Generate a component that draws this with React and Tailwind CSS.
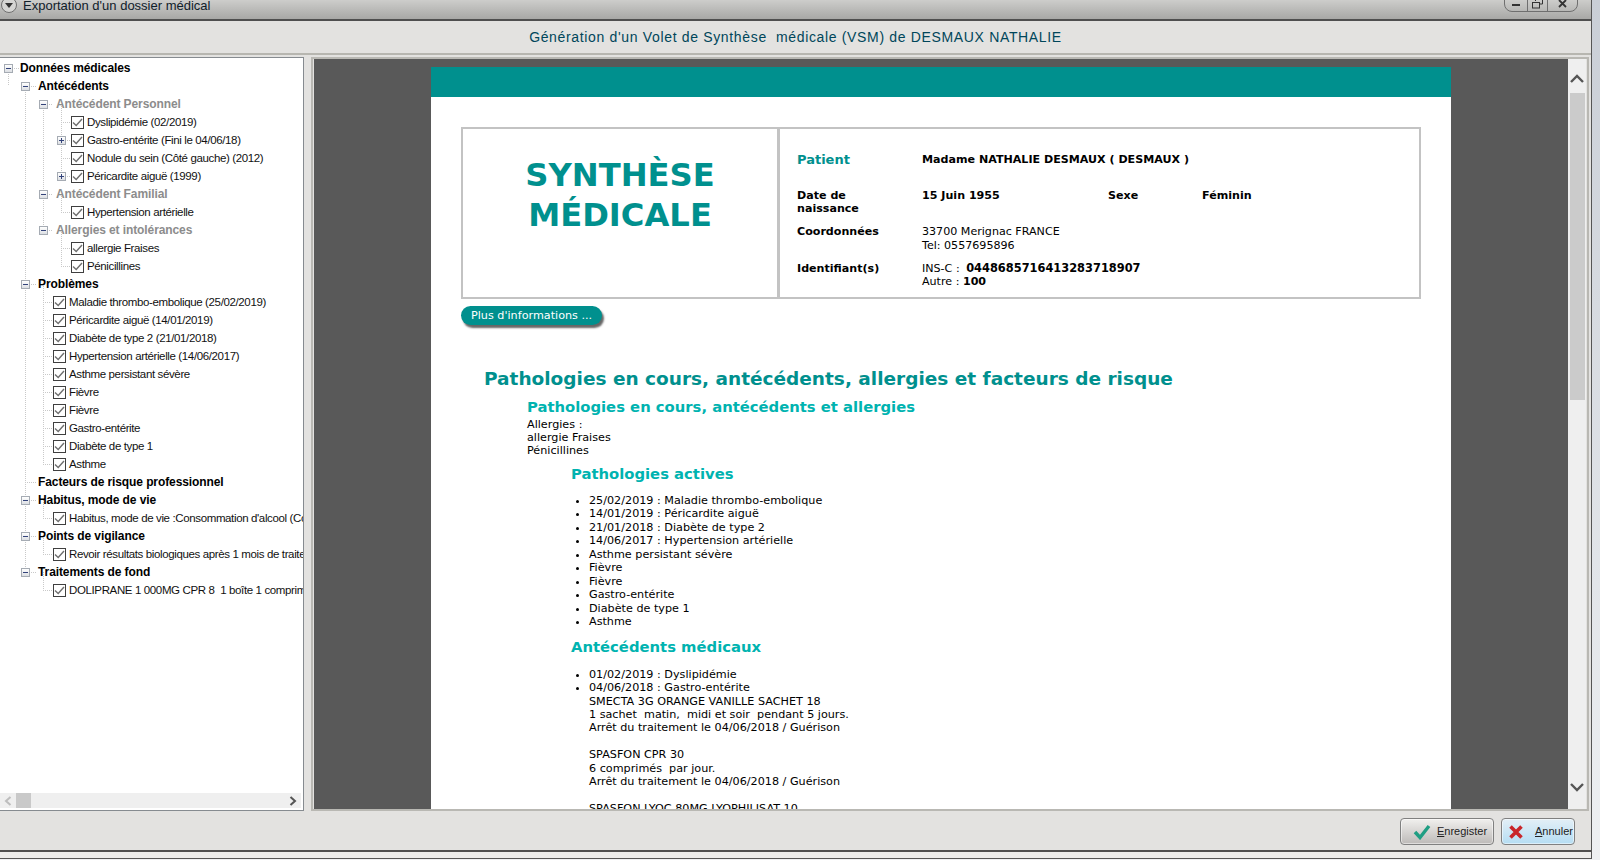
import React from "react";

const TREE_FONT = "[font-family:Liberation_Sans,sans-serif]";
const DOC_FONT = "[font-family:DejaVu_Sans,sans-serif]";

const rows = [
  { level: 0, label: "Données médicales", kind: "bold", open: "minus" },
  { level: 1, label: "Antécédents", kind: "bold", open: "minus" },
  { level: 2, label: "Antécédent Personnel", kind: "group", open: "minus" },
  { level: 3, label: "Dyslipidémie (02/2019)", kind: "check" },
  { level: 3, label: "Gastro-entérite (Fini le 04/06/18)", kind: "check", open: "plus" },
  { level: 3, label: "Nodule du sein (Côté gauche) (2012)", kind: "check" },
  { level: 3, label: "Péricardite aiguë (1999)", kind: "check", open: "plus" },
  { level: 2, label: "Antécédent Familial", kind: "group", open: "minus" },
  { level: 3, label: "Hypertension artérielle", kind: "check" },
  { level: 2, label: "Allergies et intolérances", kind: "group", open: "minus" },
  { level: 3, label: "allergie Fraises", kind: "check" },
  { level: 3, label: "Pénicillines", kind: "check" },
  { level: 1, label: "Problèmes", kind: "bold", open: "minus" },
  { level: 2, label: "Maladie thrombo-embolique (25/02/2019)", kind: "check" },
  { level: 2, label: "Péricardite aiguë (14/01/2019)", kind: "check" },
  { level: 2, label: "Diabète de type 2 (21/01/2018)", kind: "check" },
  { level: 2, label: "Hypertension artérielle (14/06/2017)", kind: "check" },
  { level: 2, label: "Asthme persistant sévère", kind: "check" },
  { level: 2, label: "Fièvre", kind: "check" },
  { level: 2, label: "Fièvre", kind: "check" },
  { level: 2, label: "Gastro-entérite", kind: "check" },
  { level: 2, label: "Diabète de type 1", kind: "check" },
  { level: 2, label: "Asthme", kind: "check" },
  { level: 1, label: "Facteurs de risque professionnel", kind: "bold" },
  { level: 1, label: "Habitus, mode de vie", kind: "bold", open: "minus" },
  { level: 2, label: "Habitus, mode de vie :Consommation d'alcool (Consommation occasionnelle)", kind: "check" },
  { level: 1, label: "Points de vigilance", kind: "bold", open: "minus" },
  { level: 2, label: "Revoir résultats biologiques après 1 mois de traitement", kind: "check" },
  { level: 1, label: "Traitements de fond", kind: "bold", open: "minus" },
  { level: 2, label: "DOLIPRANE 1 000MG CPR 8  1 boîte 1 comprimé le matin", kind: "check" },
];

const indent = ["pl-[4px]", "pl-[21px]", "pl-[39px]", "pl-[57px]"];

// dotted tree guides: x, first row, last row
const guides = [
  [8, 0, 1],
  [25, 1, 28],
  [43, 2, 9],
  [43, 12, 22],
  [43, 24, 25],
  [43, 26, 27],
  [43, 28, 29],
  [61, 2, 6],
  [61, 7, 8],
  [61, 9, 11],
];

const rowY = (i) => 10 + i * 18;

const TreeLines = () => (
  <svg className="absolute left-0 top-0" width="300" height="560">
    {guides.map(([x, a, b], i) => (
      <line key={i} x1={x + 0.5} x2={x + 0.5} y1={rowY(a)} y2={rowY(b)} stroke="#c9c9c9" strokeDasharray="1 1" />
    ))}
    {rows.map((r, i) => {
      const x = [8, 25, 43, 61][r.level];
      const end = [20, 36, 53, 71][r.level];
      return <line key={i} x1={x} x2={end} y1={rowY(i) + 0.5} y2={rowY(i) + 0.5} stroke="#c9c9c9" strokeDasharray="1 1" />;
    })}
  </svg>
);

const Expander = ({ type }) => (
  <span className="flex h-[9px] w-[9px] shrink-0 items-center justify-center border border-[#a5abb3] bg-gradient-to-b from-white to-[#dcdfe3]">
    <svg width="7" height="7" viewBox="0 0 7 7">
      <path d="M1 3.5H6" stroke="#33437a" strokeWidth="1" />
      {type === "plus" && <path d="M3.5 1V6" stroke="#33437a" strokeWidth="1" />}
    </svg>
  </span>
);

const Check = () => (
  <span className="ml-[5px] flex h-[13px] w-[13px] shrink-0 items-center justify-center border border-[#3f3f3f] bg-white">
    <svg width="11" height="11" viewBox="0 0 11 11" fill="none">
      <path d="M1 5.5L4.2 8.5L10 2" stroke="#6f6f6f" strokeWidth="1.4" />
    </svg>
  </span>
);

const TreeRow = ({ row }) => {
  const textClass = {
    bold: "font-bold text-black text-[12px] tracking-[-0.1px]",
    group: "font-bold text-[#8c8c8c] text-[12px] tracking-[-0.1px]",
    check: "text-[#111] ml-[3px] pt-px text-[11.5px] tracking-[-0.37px]",
  }[row.kind];
  const gap = row.kind === "check" ? "" : row.level === 0 ? "ml-[7px]" : "ml-[8px]";
  return (
    <div className={`relative flex h-[18px] items-center whitespace-pre ${indent[row.level]}`}>
      <span className="flex w-[9px] shrink-0">{row.open && <Expander type={row.open} />}</span>
      {row.kind === "check" && <Check />}
      <span className={`${textClass} ${gap}`}>{row.label}</span>
    </div>
  );
};

const Chevron = ({ dir, color = "#555" }) => {
  const d = {
    up: "M1 8L7 2L13 8",
    down: "M1 2L7 8L13 2",
  }[dir];
  return (
    <svg width="14" height="10" viewBox="0 0 14 10" fill="none">
      <path d={d} stroke={color} strokeWidth="2.4" />
    </svg>
  );
};

const SideChevron = ({ dir, color }) => (
  <svg width="8" height="10" viewBox="0 0 8 10" fill="none">
    <path d={dir === "left" ? "M6.5 1L2 5L6.5 9" : "M1.5 1L6 5L1.5 9"} stroke={color} strokeWidth="2" />
  </svg>
);

const TitleBar = () => (
  <div className="flex h-[21px] shrink-0 overflow-hidden border-b-2 border-[#4f4f4f] bg-gradient-to-b from-[#cdcdcb] to-[#a8a8a6]">
    <span className="ml-px -mt-[3px] flex h-[16px] w-[16px] items-center justify-center rounded-full border border-[#6f6f6f] bg-[#d5d5d3]">
      <svg width="8" height="5" viewBox="0 0 8 5">
        <path d="M0 0H8L4 5Z" fill="#333" />
      </svg>
    </span>
    <span className={`-mt-[2px] ml-[6px] text-[13px] leading-[16px] text-[#10202a] ${TREE_FONT}`}>
      Exportation d'un dossier médical
    </span>
    <div className="ml-auto mr-[13px] -mt-[5px] flex h-[17px] w-[74px] rounded-b-lg border border-[#6f6f6f]">
      <span className="flex w-[22px] items-center justify-center pt-[3px]">
        <span className="h-[2px] w-[8px] bg-[#333]" />
      </span>
      <span className="flex w-[21px] items-center justify-center border-x border-[#6f6f6f]">
        <svg width="11" height="11" viewBox="0 0 11 11" fill="none" stroke="#333">
          <path d="M3.5 3V.5H10.5V6H7.5" />
          <rect x=".5" y="4.5" width="7" height="5.5" />
        </svg>
      </span>
      <span className="flex flex-1 items-center justify-center">
        <svg width="9" height="9" viewBox="0 0 9 9">
          <path d="M1 1L8 8M8 1L1 8" stroke="#333" strokeWidth="1.8" />
        </svg>
      </span>
    </div>
  </div>
);

const TreePanel = () => (
  <div className={`flex w-[304px] shrink-0 flex-col border border-l-0 border-[#868b90] bg-white pb-[2px] ${TREE_FONT}`}>
    <div className="relative min-h-0 flex-1 overflow-hidden pt-px">
      <TreeLines />
      {rows.map((r, i) => (
        <TreeRow key={i} row={r} />
      ))}
    </div>
    <div className="flex h-[15px] w-[301px] shrink-0 items-center bg-[#efefef]">
      <span className="flex w-[16px] justify-center">
        <SideChevron dir="left" color="#bdbdbd" />
      </span>
      <span className="h-full w-[15px] bg-[#c9c9c9]" />
      <span className="ml-auto mr-[4px] flex">
        <SideChevron dir="right" color="#555" />
      </span>
    </div>
  </div>
);

const H3 = ({ children, className }) => (
  <h3 className={`pl-[140px] text-[14.8px] font-bold leading-[20px] text-[#00b3b0] ${className}`}>{children}</h3>
);

const PatientCard = () => (
  <div className="ml-[30px] flex h-[172px] w-[960px] border-2 border-[#c3c3c3]">
    <div className="w-[314px] shrink-0 pt-[26px] text-center text-[32.2px] font-bold leading-[40px] text-[#00908e]">
      SYNTHÈSE
      <br />
      MÉDICALE
    </div>
    <div className="grid flex-1 grid-cols-[125px_186px_94px_1fr] content-start border-l-[3px] border-[#c3c3c3] pl-[17px] pt-[23px] text-[11.1px] leading-[13.4px] text-black">
      <div className="h-[37px] text-[13px] font-bold leading-[16px] text-[#00908e]">Patient</div>
      <div className="col-span-3 h-[37px] pt-px font-bold">Madame NATHALIE DESMAUX ( DESMAUX )</div>
      <div className="h-[36px] font-bold">
        Date de
        <br />
        naissance
      </div>
      <div className="font-bold">15 Juin 1955</div>
      <div className="font-bold">Sexe</div>
      <div className="font-bold">Féminin</div>
      <div className="h-[37px] font-bold">Coordonnées</div>
      <div className="col-span-3 leading-[14px]">
        33700 Merignac FRANCE
        <br />
        Tel: 0557695896
      </div>
      <div className="font-bold">Identifiant(s)</div>
      <div className="col-span-3">
        INS-C : <b className="ml-[3px] text-[11.4px]">0448685716413283718907</b>
        <br />
        Autre : <b>100</b>
      </div>
    </div>
  </div>
);

const Document = () => (
  <div className={`ml-[117px] mt-[8px] h-[1000px] w-[1020px] shrink-0 bg-white ${DOC_FONT}`}>
    <div className="h-[30px] bg-[#00908e]" />
    <div className="h-[30px]" />
    <PatientCard />
    <div className="ml-[30px] mt-[7px] flex h-[19px] w-[141px] items-center rounded-full bg-[#00908e] pl-[10px] pt-[2px] text-[11.2px] text-white shadow-[2px_3px_2px_#666]">
      Plus d'informations ...
    </div>
    <h1 className="mt-[42px] pl-[53px] text-[18.5px] font-bold leading-[24px] text-[#00908e]">
      Pathologies en cours, antécédents, allergies et facteurs de risque
    </h1>
    <h2 className="mt-[6px] pl-[96px] text-[14.8px] font-bold leading-[20px] text-[#00b3b0]">
      Pathologies en cours, antécédents et allergies
    </h2>
    <p className="mt-[0.5px] pl-[96px] text-[11.2px] leading-[13.4px] text-black">
      Allergies :
      <br />
      allergie Fraises
      <br />
      Pénicillines
    </p>
    <H3 className="mt-[6px]">Pathologies actives</H3>
    <ul className="mt-[10px] list-disc pl-[158px] text-[11.2px] leading-[13.5px] text-black">
      <li>25/02/2019 : Maladie thrombo-embolique</li>
      <li>14/01/2019 : Péricardite aiguë</li>
      <li>21/01/2018 : Diabète de type 2</li>
      <li>14/06/2017 : Hypertension artérielle</li>
      <li>Asthme persistant sévère</li>
      <li>Fièvre</li>
      <li>Fièvre</li>
      <li>Gastro-entérite</li>
      <li>Diabète de type 1</li>
      <li>Asthme</li>
    </ul>
    <H3 className="mt-[8px]">Antécédents médicaux</H3>
    <ul className="mt-[11px] list-disc whitespace-pre pl-[158px] text-[11.2px] leading-[13.4px] text-black">
      <li>01/02/2019 : Dyslipidémie</li>
      <li>
        04/06/2018 : Gastro-entérite
        <br />
        SMECTA 3G ORANGE VANILLE SACHET 18
        <br />
        1 sachet  matin,  midi et soir  pendant 5 jours.
        <br />
        Arrêt du traitement le 04/06/2018 / Guérison
        <br />
        <br />
        SPASFON CPR 30
        <br />
        6 comprimés  par jour.
        <br />
        Arrêt du traitement le 04/06/2018 / Guérison
        <br />
        <br />
        SPASFON LYOC 80MG LYOPHILISAT 10
      </li>
    </ul>
  </div>
);

const DocPane = () => (
  <div className="flex min-w-0 flex-1 border-2 border-[#b9b8b3] px-px">
    <div className="flex min-w-0 flex-1 overflow-hidden bg-[#595959]">
      <Document />
    </div>
    <div className="flex w-[18px] shrink-0 flex-col items-center bg-[#efefef]">
      <span className="mt-[15px] flex h-[10px]">
        <Chevron dir="up" />
      </span>
      <span className="mt-[9px] h-[307px] w-[15px] bg-[#cbcbcb]" />
      <span className="mb-[17px] mt-auto flex h-[10px]">
        <Chevron dir="down" />
      </span>
    </div>
  </div>
);

const FooterButton = ({ className, icon, first, rest }) => (
  <button
    className={`flex h-[27px] items-center rounded-[4px] border border-[#808080] text-[11px] text-[#222] shadow-[inset_0_0_0_1px_#ffffff80] ${TREE_FONT} ${className}`}
  >
    {icon}
    <span>
      <span className="underline">{first}</span>
      {rest}
    </span>
  </button>
);

const Footer = () => (
  <div className="flex h-[37px] shrink-0 items-start justify-end gap-[7px] pr-[16px] pt-[5px]">
    <FooterButton
      className="w-[94px] bg-gradient-to-b from-[#f1f0ee] to-[#bdbab8] pl-[12px]"
      first="E"
      rest="nregister"
      icon={
        <svg width="18" height="16" viewBox="0 0 18 16" className="mr-[6px]" fill="none">
          <path d="M2 8L7 13.5L16 2" stroke="#1f9e83" strokeWidth="3.4" />
        </svg>
      }
    />
    <FooterButton
      className="w-[74px] overflow-hidden bg-gradient-to-b from-[#e3eff6] to-[#b5ddf3] pl-[7px]"
      first="A"
      rest="nnuler"
      icon={
        <svg width="14" height="14" viewBox="0 0 14 14" className="mr-[12px] shrink-0" fill="none">
          <path d="M1.5 1.5L12.5 12.5M12.5 1.5L1.5 12.5" stroke="#c9262a" strokeWidth="3.6" />
        </svg>
      }
    />
  </div>
);

export default function App() {
  return (
    <div className="flex h-[860px] w-[1600px] overflow-hidden bg-[#eef0f2]">
      <div className="flex h-[859px] w-[1592px] shrink-0 flex-col border-r border-b border-[#555] bg-[#e3e2e0]">
        <TitleBar />
        <div
          className={`flex h-[34px] shrink-0 items-center justify-center border-b-2 border-[#b7b6b0] text-[14px] tracking-[0.66px] text-[#00465a] whitespace-pre ${TREE_FONT}`}
        >
          Génération d'un Volet de Synthèse  médicale (VSM) de DESMAUX NATHALIE
        </div>
        <div className="flex h-[758px] shrink-0 py-[2px] pr-[2px]">
          <TreePanel />
          <div className="w-[7px] shrink-0" />
          <DocPane />
        </div>
        <Footer />
        <div className="flex-1 border-t-2 border-[#4f4f4f] bg-[#ececeb]" />
      </div>
      <div className="w-[8px] bg-gradient-to-b from-[#c9ced6] to-[#eef0f2]" />
    </div>
  );
}
